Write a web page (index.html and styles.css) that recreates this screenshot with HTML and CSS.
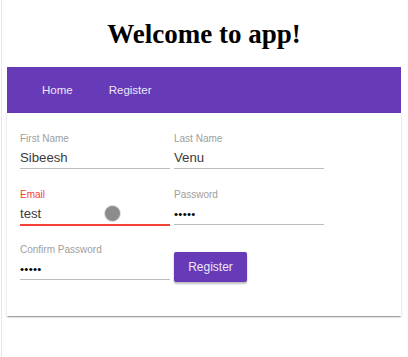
FILE: index.html
```html
<!DOCTYPE html>
<html lang="en">
<head>
  <meta charset="utf-8"/>
  <meta name="viewport" content="width=device-width, initial-scale=1"/>
  <title>Welcome to app</title>
  <link rel="stylesheet" href="styles.css">
</head>
<body>
  <div class="frame">
    <h1 class="title">Welcome to app!</h1>

    <nav class="nav-bar">
      <a class="nav-link" href="#">Home</a>
      <a class="nav-link" href="#">Register</a>
    </nav>

    <div class="card">
      <form class="form-grid">
        <div class="field">
          <label class="field-label">First Name</label>
          <div class="field-value">Sibeesh</div>
        </div>
        <div class="field">
          <label class="field-label">Last Name</label>
          <div class="field-value">Venu</div>
        </div>

        <div class="field field-invalid">
          <label class="field-label">Email</label>
          <div class="field-value">test</div>
          <span class="cursor-dot"></span>
        </div>
        <div class="field">
          <label class="field-label">Password</label>
          <div class="field-value dots">•••••</div>
        </div>

        <div class="field">
          <label class="field-label">Confirm Password</label>
          <div class="field-value dots">•••••</div>
        </div>
        <div class="actions">
          <button type="button" class="btn-register">Register</button>
        </div>
      </form>
    </div>
  </div>
</body>
</html>
```

FILE: styles.css
```css
body {
  margin: 0;
  padding: 0 7px 0 1px;
  background-color: #fff;
  font-family: "Liberation Sans", Arial, sans-serif;
}

.frame {
  border-left: 1px solid #e6e6e6;
  padding-left: 5px;
  min-height: 100vh;
  box-sizing: border-box;
  padding-top: 19px;
}

.title {
  margin: 0 0 17px;
  font-family: "Liberation Serif", serif;
  font-size: 27px;
  font-weight: 700;
  text-align: center;
  color: #000;
}

.nav-bar {
  display: flex;
  align-items: center;
  gap: 36px;
  height: 46px;
  padding-left: 35px;
  background-color: #673ab7;
}

.nav-link {
  color: #ede7f6;
  font-size: 11.5px;
  text-decoration: none;
}

.card {
  background-color: #fff;
  padding: 19px 14px 34px 13px;
  box-shadow: 0 2px 1px -1px rgba(0, 0, 0, 0.2), 0 1px 1px rgba(0, 0, 0, 0.14), 0 1px 3px rgba(0, 0, 0, 0.12);
}

.form-grid {
  display: grid;
  grid-template-columns: 150px 150px;
  column-gap: 4px;
  row-gap: 18.5px;
}

.field {
  position: relative;
  display: flex;
  flex-direction: column;
}

.field-label {
  font-size: 10px;
  line-height: 14px;
  color: #9e9e9e;
}

.field-value {
  margin-top: 2px;
  font-size: 13.2px;
  line-height: 20px;
  color: #3a3a3a;
  border-bottom: 1px solid #bdbdbd;
}

.dots {
  color: #000;
  font-size: 11.5px;
  letter-spacing: 0.3px;
}

.field-invalid .field-label {
  color: #f44336;
}

.field-invalid .field-value {
  border-bottom-color: #f44336;
  box-shadow: 0 1px 0 #f44336;
}

.cursor-dot {
  position: absolute;
  left: 85px;
  top: 18px;
  width: 15px;
  height: 15px;
  border-radius: 50%;
  background-color: #8c8c8c;
  box-shadow: 0 0 0 1px #dcdcdc;
}

.actions {
  padding-top: 9px;
}

.btn-register {
  width: 73px;
  height: 30px;
  border: none;
  border-radius: 2px;
  background-color: #673ab7;
  color: #ede7f6;
  font-family: "Liberation Sans", Arial, sans-serif;
  font-size: 12px;
  cursor: pointer;
  box-shadow: 0 2px 2px rgba(0, 0, 0, 0.24), 0 0 2px rgba(0, 0, 0, 0.12);
}
```
